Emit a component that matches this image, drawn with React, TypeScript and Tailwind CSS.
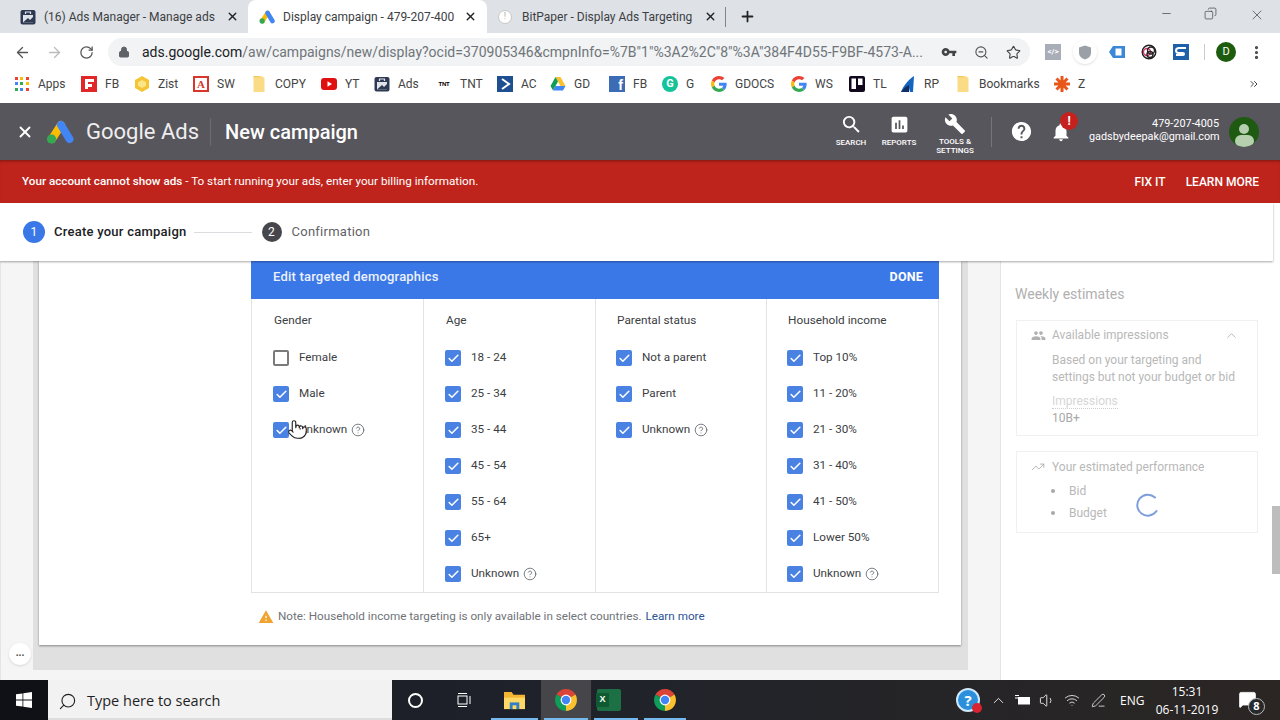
import React from "react";
import { ArrowLeft, ArrowRight, RotateCw, Lock, ZoomOut, Star, X, Plus, Minus, Copy, MoreVertical, ChevronUp, CircleHelp, Check, Search, ChevronsRight, Volume1, Wifi, PenLine, TrendingUp, MessageSquare, Pointer } from "lucide-react";

const P = {
  search: "M15.5 14h-.79l-.28-.27A6.471 6.471 0 0 0 16 9.5 6.5 6.5 0 1 0 9.5 16c1.61 0 3.09-.59 4.23-1.57l.27.28v.79l5 4.99L20.49 19l-4.99-5zm-6 0C7.01 14 5 11.99 5 9.5S7.01 5 9.5 5 14 7.01 14 9.5 11.99 14 9.5 14z",
  chart: "M19 3H5c-1.1 0-2 .9-2 2v14c0 1.1.9 2 2 2h14c1.1 0 2-.9 2-2V5c0-1.1-.9-2-2-2zM9 17H7v-7h2v7zm4 0h-2V7h2v10zm4 0h-2v-4h2v4z",
  wrench: "M22.7 19l-9.1-9.1c.9-2.3.4-5-1.5-6.9-2-2-5-2.4-7.4-1.3L9 6 6 9 1.6 4.7C.4 7.1.9 10.1 2.9 12.1c1.9 1.9 4.6 2.4 6.9 1.5l9.1 9.1c.4.4 1 .4 1.4 0l2.3-2.3c.5-.4.5-1.1.1-1.4z",
  help: "M12 2C6.48 2 2 6.48 2 12s4.48 10 10 10 10-4.48 10-10S17.52 2 12 2zm1 17h-2v-2h2v2zm2.07-7.75l-.9.92C13.45 12.9 13 13.5 13 15h-2v-.5c0-1.1.45-2.1 1.17-2.83l1.24-1.26c.37-.36.59-.86.59-1.41 0-1.1-.9-2-2-2s-2 .9-2 2H8c0-2.21 1.79-4 4-4s4 1.79 4 4c0 .88-.36 1.68-.93 2.25z",
  bell: "M12 22c1.1 0 2-.9 2-2h-4c0 1.1.89 2 2 2zm6-6v-5c0-3.07-1.64-5.64-4.5-6.32V4c0-.83-.67-1.5-1.5-1.5s-1.5.67-1.5 1.5v.68C7.63 5.36 6 7.92 6 11v5l-2 2v1h16v-1l-2-2z",
  people: "M16 11c1.66 0 2.99-1.34 2.99-3S17.66 5 16 5c-1.66 0-3 1.34-3 3s1.34 3 3 3zm-8 0c1.66 0 2.99-1.34 2.99-3S9.66 5 8 5C6.34 5 5 6.34 5 8s1.34 3 3 3zm0 2c-2.33 0-7 1.17-7 3.5V19h14v-2.5c0-2.33-4.67-3.5-7-3.5zm8 0c-.29 0-.62.02-.97.05 1.16.84 1.97 1.97 1.97 3.45V19h6v-2.5c0-2.33-4.67-3.5-7-3.5z",
  warning: "M1 21h22L12 2 1 21zm12-3h-2v-2h2v2zm0-4h-2v-4h2v4z",
  key: "M12.65 10C11.83 7.67 9.61 6 7 6c-3.31 0-6 2.69-6 6s2.69 6 6 6c2.61 0 4.83-1.67 5.65-4H17v4h4v-4h2v-4H12.65zM7 14c-1.1 0-2-.9-2-2s.9-2 2-2 2 .9 2 2-.9 2-2 2z",
};

function Mi({ d, className }: { d: string; className?: string }) {
  return (
    <svg viewBox="0 0 24 24" className={className} fill="currentColor">
      <path d={d} />
    </svg>
  );
}

function AdsLogo({ className }: { className?: string }) {
  return (
    <svg viewBox="0 0 28 24" className={className}>
      <line x1="15" y1="5" x2="6" y2="19" stroke="#fbbc04" strokeWidth="8" strokeLinecap="round" />
      <line x1="15" y1="5" x2="23.5" y2="19" stroke="#4285f4" strokeWidth="8" strokeLinecap="round" />
      <circle cx="5.5" cy="19" r="4.6" fill="#34a853" />
    </svg>
  );
}

function Chrome({ className }: { className?: string }) {
  return (
    <svg viewBox="0 0 24 24" className={className}>
      <path fill="#db4437" d="M12 12L2.5 6.5A11 11 0 0 1 21.5 6.5Z" />
      <path fill="#fbc02d" d="M12 12L21.5 6.5A11 11 0 0 1 12 23Z" />
      <path fill="#0f9d58" d="M12 12L12 23A11 11 0 0 1 2.5 6.5Z" />
      <circle cx="12" cy="12" r="5.4" fill="#fff" />
      <circle cx="12" cy="12" r="4.2" fill="#4285f4" />
    </svg>
  );
}

function GLogo() {
  return (
    <svg viewBox="0 0 48 48" className="w-[16px] h-[16px]">
      <path fill="#EA4335" d="M24 9.5c3.54 0 6.71 1.22 9.21 3.6l6.85-6.85C35.9 2.38 30.47 0 24 0 14.62 0 6.51 5.38 2.56 13.22l7.98 6.19C12.43 13.72 17.74 9.5 24 9.5z" />
      <path fill="#4285F4" d="M46.98 24.55c0-1.57-.15-3.09-.38-4.55H24v9.02h12.94c-.58 2.96-2.26 5.48-4.78 7.18l7.73 6c4.51-4.18 7.09-10.36 7.09-17.65z" />
      <path fill="#FBBC05" d="M10.53 28.59c-.48-1.45-.76-2.99-.76-4.59s.27-3.14.76-4.59l-7.98-6.19C.92 16.46 0 20.12 0 24c0 3.88.92 7.54 2.56 10.78l7.97-6.19z" />
      <path fill="#34A853" d="M24 48c6.48 0 11.93-2.13 16.08-5.81l-7.73-6c-2.15 1.45-4.92 2.3-8.35 2.3-6.26 0-11.57-4.22-13.47-9.91l-7.98 6.19C6.51 42.62 14.62 48 24 48z" />
    </svg>
  );
}

function AdsManagerIcon({ className }: { className?: string }) {
  return (
    <svg viewBox="0 0 16 16" className={className}>
      <rect x="0.5" y="1" width="15" height="14.5" rx="2" fill="#2f3a52" />
      <rect x="3" y="6" width="10" height="7.5" fill="#dfe3ea" />
      <path d="M3 13.5L8 9l2 2 3-3v5.5Z" fill="#2f3a52" />
      <path d="M5.5 5V3h5v2" fill="none" stroke="#dfe3ea" strokeWidth="1.2" />
    </svg>
  );
}

function Folder() {
  return (
    <svg viewBox="0 0 16 16" className="w-[16px] h-[18px]">
      <path d="M2.5 0h8l3 2v14h-11Z" fill="#fbdc86" />
      <path d="M2.5 0h6v1.5h-6Z" fill="#f3cb62" />
    </svg>
  );
}

const AppsIcon = () => (
  <div className="grid grid-cols-3 gap-[2px] w-[14px] h-[14px]">
    {["#ea4335", "#fbbc04", "#ea4335", "#4285f4", "#34a853", "#fbbc04", "#34a853", "#4285f4", "#ea4335"].map((c, i) => (
      <svg key={i} viewBox="0 0 4 4" className="w-[3px] h-[3px]"><rect width="4" height="4" fill={c} /></svg>
    ))}
  </div>
);

const bookmarks: { w: string; label: string; icon: React.ReactNode }[] = [
  { w: "w-[67px]", label: "Apps", icon: <AppsIcon /> },
  {
    w: "w-[53px]", label: "FB", icon: (
      <svg viewBox="0 0 16 16" className="w-[16px] h-[16px]"><rect width="16" height="16" fill="#e12828" /><path d="M4 3h9v3H7v2h4v3H7v2H4Z" fill="#fff" /></svg>
    ),
  },
  {
    w: "w-[59px]", label: "Zist", icon: (
      <svg viewBox="0 0 16 16" className="w-[16px] h-[16px]"><path d="M8 0l7 4v8l-7 4-7-4V4Z" fill="#f5c533" /><path d="M8 4l4 2.3v3.4L8 12 4 9.7V6.3Z" fill="#fde68a" /></svg>
    ),
  },
  {
    w: "w-[58px]", label: "SW", icon: (
      <div className="w-[16px] h-[16px] border-2 border-[#d9362b] flex items-center justify-center text-[#d9362b] text-[11px] font-bold leading-none font-['Liberation_Serif',serif]">A</div>
    ),
  },
  { w: "w-[70px]", label: "COPY", icon: <Folder /> },
  {
    w: "w-[53px]", label: "YT", icon: (
      <svg viewBox="0 0 16 16" className="w-[16px] h-[16px]"><rect y="2" width="16" height="12" rx="3" fill="#e01010" /><path d="M6.5 5.2v5.6L11 8Z" fill="#fff" /></svg>
    ),
  },
  { w: "w-[62px]", label: "Ads", icon: <AdsManagerIcon className="w-[16px] h-[16px]" /> },
  {
    w: "w-[61px]", label: "TNT", icon: (
      <div className="w-[16px] text-center text-[6px] font-black tracking-tighter leading-none text-black font-['Liberation_Sans',sans-serif]">TNT</div>
    ),
  },
  {
    w: "w-[53px]", label: "AC", icon: (
      <svg viewBox="0 0 16 16" className="w-[16px] h-[16px]"><rect width="16" height="16" fill="#1d4f91" /><path d="M5 3l7 5-7 5" fill="none" stroke="#fff" strokeWidth="2" /></svg>
    ),
  },
  {
    w: "w-[59px]", label: "GD", icon: (
      <svg viewBox="0 0 16 16" className="w-[16px] h-[16px]"><path d="M5.5 1h5l5 9h-5Z" fill="#fbc02d" /><path d="M5.5 1L0.5 10l2.5 4.5L8 5.5Z" fill="#0f9d58" /><path d="M3 14.5h10l2.5-4.5H5.5Z" fill="#4285f4" /></svg>
    ),
  },
  {
    w: "w-[53px]", label: "FB", icon: (
      <div className="w-[16px] h-[16px] bg-[#3b6cb5] text-white text-[14px] font-bold leading-[18px] text-right pr-[2px] font-['Liberation_Sans',sans-serif]">f</div>
    ),
  },
  {
    w: "w-[49px]", label: "G", icon: (
      <div className="w-[16px] h-[16px] rounded-full bg-[#15c39a] text-white text-[11px] font-bold leading-[16px] text-center">G</div>
    ),
  },
  { w: "w-[80px]", label: "GDOCS", icon: <GLogo /> },
  { w: "w-[58px]", label: "WS", icon: <GLogo /> },
  {
    w: "w-[51px]", label: "TL", icon: (
      <svg viewBox="0 0 16 16" className="w-[16px] h-[16px]"><rect width="16" height="16" rx="2" fill="#12081e" /><rect x="2.5" y="2.5" width="4.5" height="10.5" fill="#fff" /><rect x="9" y="2.5" width="4.5" height="6.5" fill="#fff" /></svg>
    ),
  },
  {
    w: "w-[55px]", label: "RP", icon: (
      <svg viewBox="0 0 16 16" className="w-[16px] h-[16px]"><path d="M14 0C8 4 4 9 1 16h5l3-4 1 4h3Z" fill="#1565c0" /><path d="M1 16c2-3 4-5 8-7v7Z" fill="#0d2f63" /></svg>
    ),
  },
  { w: "w-[99px]", label: "Bookmarks", icon: <Folder /> },
  {
    w: "w-[40px]", label: "Z", icon: (
      <svg viewBox="0 0 16 16" className="w-[16px] h-[16px]" stroke="#e8561a" strokeWidth="3"><path d="M8 0v16M0 8h16M2.5 2.5l11 11M13.5 2.5l-11 11" /></svg>
    ),
  },
];

function Tab({ w, children, active }: { w: string; children: React.ReactNode; active?: boolean }) {
  return (
    <div className={`${w} h-[33px] flex items-center shrink-0 ${active ? "bg-white rounded-t-[8px]" : ""}`}>{children}</div>
  );
}

function TopBar() {
  return (
    <div className="h-[33px] bg-[#dee1e6] flex items-center text-[12px] text-[#3c4043]">
      <Tab w="w-[248px]">
        <AdsManagerIcon className="ml-[20px] w-[16px] h-[16px]" />
        <span className="ml-[8px] w-[172px] whitespace-nowrap">(16) Ads Manager - Manage ads</span>
        <X size={13} strokeWidth={2.5} className="text-[#222] ml-[10px]" />
      </Tab>
      <Tab w="w-[239px]" active>
        <AdsLogo className="ml-[11px] w-[16px] h-[14px]" />
        <span className="ml-[8px] w-[172px] whitespace-nowrap">Display campaign - 479-207-400</span>
        <X size={13} strokeWidth={2.5} className="text-[#222] ml-[9px]" />
      </Tab>
      <Tab w="w-[239px]">
        <div className="ml-[11px] w-[14px] h-[14px] rounded-full bg-white border border-[#c8c8c8] flex items-center justify-center text-[9px] text-[#aaa] leading-none">!</div>
        <span className="ml-[10px] w-[172px] whitespace-nowrap">BitPaper - Display Ads Targeting</span>
        <X size={13} strokeWidth={2.5} className="text-[#222] ml-[10px]" />
      </Tab>
      <div className="w-px h-[20px] bg-[#80868b] ml-[-1px]" />
      <Plus size={17} strokeWidth={2.5} className="text-[#222] ml-[13px]" />
      <div className="ml-auto flex items-start h-full pt-[7px] text-[#333]">
        <Minus size={13} strokeWidth={1.2} className="mr-[31px]" />
        <Copy size={13} strokeWidth={1.2} className="mr-[32px] -scale-x-100" />
        <X size={16} strokeWidth={1} className="mr-[15px]" />
      </div>
    </div>
  );
}

function Toolbar() {
  return (
    <div className="h-[38px] bg-white flex items-center">
      <ArrowLeft size={17} strokeWidth={1.8} className="ml-[14px] text-[#555]" />
      <ArrowRight size={17} strokeWidth={1.8} className="ml-[15px] text-[#bbb]" />
      <RotateCw size={15} strokeWidth={2} className="ml-[16px] text-[#555]" />
      <div className="ml-[14px] w-[922px] h-[28px] bg-[#f1f3f4] rounded-full flex items-center text-[14px] whitespace-nowrap">
        <Lock size={12} fill="#5f6368" strokeWidth={2} className="ml-[10px] text-[#5f6368]" />
        <span className="ml-[12px] w-[782px] text-[#202124]">
          ads.google.com<span className="text-[#70757a]">/aw/campaigns/new/display?ocid=370905346&amp;cmpnInfo=%7B"1"%3A2%2C"8"%3A"384F4D55-F9BF-4573-A...</span>
        </span>
        <Mi d={P.key} className="ml-[17px] w-[16px] h-[16px] text-[#444]" />
        <ZoomOut size={15} strokeWidth={1.8} className="ml-[17px] text-[#555]" />
        <Star size={15} strokeWidth={1.8} className="ml-[17px] text-[#444]" />
      </div>
      <div className="ml-[15px] w-[16px] h-[16px] bg-[#a9adb8] text-white text-[8px] font-bold flex items-center justify-center">&lt;/&gt;</div>
      <div className="ml-[12px] w-[24px] h-[24px] rounded-full bg-white shadow flex items-center justify-center">
        <svg viewBox="0 0 12 14" className="w-[12px] h-[15px]"><path d="M6 0l6 2v5c0 4-3 6-6 7-3-1-6-3-6-7V2Z" fill="#9aa0a6" /></svg>
      </div>
      <svg viewBox="0 0 16 16" className="ml-[12px] w-[16px] h-[16px]"><path d="M4 2h12v12H4L0 8Z" fill="#3b87d8" /><rect x="6.500" y="4.500" width="6" height="7" fill="#fff" /></svg>
      <svg viewBox="0 0 16 16" className="ml-[16px] w-[16px] h-[16px]" fill="none" stroke="#222" strokeWidth="1.4"><circle cx="8" cy="8" r="6.8" /><circle cx="6" cy="8" r="3.5" stroke="#d6336c" /><circle cx="10" cy="6.5" r="3.5" /><circle cx="9" cy="10.5" r="3" /></svg>
      <svg viewBox="0 0 16 16" className="ml-[16px] w-[16px] h-[16px]"><rect width="16" height="16" fill="#1d5fa8" /><path d="M13 4H6Q3 4 3 6.500T6 9h4q1 0 1 1t-1 1H3" fill="none" stroke="#fff" strokeWidth="2" /></svg>
      <div className="ml-[15px] w-px h-[16px] bg-[#ccc]" />
      <div className="ml-[11px] w-[20px] h-[20px] rounded-full bg-[#1d5c0f] text-white text-[11px] flex items-center justify-center">D</div>
      <MoreVertical size={17} strokeWidth={2.5} className="ml-[12px] text-[#444]" />
    </div>
  );
}

function Bookmarks() {
  return (
    <div className="h-[29px] bg-white pl-[14px] flex items-center text-[12px] text-[#444] whitespace-nowrap pb-[3px]">
      {bookmarks.map((b, i) => (
        <div key={i} className={`${b.w} flex items-center gap-[8px] shrink-0`}>
          <div className="w-[16px] flex justify-center shrink-0">{b.icon}</div>
          <span>{b.label}</span>
        </div>
      ))}
      <ChevronsRight size={12} className="ml-[154px] text-[#444]" />
    </div>
  );
}

function NavItem({ d, size, label, w, lift }: { d: string; size: string; label: React.ReactNode; w: string; lift?: boolean }) {
  return (
    <div className={`${w} flex flex-col items-center font-medium`}>
      <div className="h-[28px] flex items-center"><Mi d={d} className={size} /></div>
      <div className={`${lift ? "mt-[-1px]" : ""} text-[8px] leading-[9px] text-center`}>{label}</div>
    </div>
  );
}

function Header() {
  return (
    <div className="h-[57px] bg-[#58565d] flex items-center text-white mt-[3px] relative">
      <X size={18} strokeWidth={2.5} className="ml-[16px]" />
      <AdsLogo className="ml-[12px] w-[28px] h-[24px]" />
      <div className="ml-[12px] text-[22px] leading-none text-[#eeeeee] whitespace-nowrap">Google Ads</div>
      <div className="ml-[11px] w-px h-[28px] bg-[#6d6b72]" />
      <div className="ml-[14px] text-[20px] font-medium whitespace-nowrap">New campaign</div>
      <div className="ml-auto flex items-start self-stretch pt-[7px]">
        <NavItem w="w-[48px]" d={P.search} size="w-[23px] h-[23px]" label="SEARCH" />
        <NavItem w="w-[48px]" d={P.chart} size="w-[21px] h-[21px]" label="REPORTS" />
        <NavItem w="w-[64px]" d={P.wrench} size="w-[22px] h-[22px]" label={<>TOOLS &amp;<br />SETTINGS</>} lift />
      </div>
      <div className="ml-[4px] w-px h-[30px] bg-[#77757c]" />
      <Mi d={P.help} className="ml-[18px] w-[23px] h-[23px]" />
      <div className="relative ml-[17px] w-[22px] h-[22px]">
        <Mi d={P.bell} className="w-[22px] h-[22px]" />
        <div className="absolute top-[-9px] left-[10px] w-[18px] h-[18px] rounded-full bg-[#c5221f] text-[12px] font-bold flex items-center justify-center">!</div>
      </div>
      <div className="ml-[17px] w-[130px] text-right text-[10.85px] leading-[13px] whitespace-nowrap mb-[4px]">
        <div>479-207-4005</div>
        <div>gadsbydeepak@gmail.com</div>
      </div>
      <div className="ml-[10px] mr-[21px] w-[30px] h-[30px] rounded-full bg-[#1f5a12] overflow-hidden flex flex-col items-center">
        <div className="w-[10px] h-[10px] rounded-full bg-[#b6cfae] mt-[7px]" />
        <div className="w-[19px] h-[12px] rounded-full bg-[#b6cfae] mt-[1px]" />
      </div>
    </div>
  );
}

function Alert() {
  return (
    <div className="h-[43px] bg-[#be241b] flex items-center text-white text-[11.7px] pl-[22px] pr-[21px] shadow-[inset_0_3px_3px_-2px_rgba(0,0,0,0.35)] whitespace-nowrap">
      <span className="font-medium">Your account cannot show ads</span>
      <span>&nbsp;- To start running your ads, enter your billing information.</span>
      <span className="ml-auto font-medium text-[12px]">FIX IT</span>
      <span className="ml-[20px] font-medium text-[12px]">LEARN MORE</span>
    </div>
  );
}

function Stepper() {
  return (
    <div className="h-[58px] bg-white flex items-center pl-[23px] text-[13px] tracking-[0.25px] relative z-10 shadow-[0_1px_2px_rgba(0,0,0,0.35)] w-[1273px] whitespace-nowrap">
      <div className="w-[22px] h-[22px] rounded-full bg-[#3b78e7] text-white text-[12px] flex items-center justify-center">1</div>
      <span className="ml-[9px] font-medium text-[#202124]">Create your campaign</span>
      <div className="ml-[7px] w-[58px] h-px bg-[#dadce0]" />
      <div className="ml-[10px] w-[20px] h-[20px] rounded-full bg-[#46464c] text-white text-[12px] flex items-center justify-center">2</div>
      <span className="ml-[10px] text-[#5f6368]">Confirmation</span>
    </div>
  );
}

function Box({ checked }: { checked: boolean }) {
  return checked ? (
    <div className="w-[16px] h-[16px] rounded-[2px] bg-[#4a82e4] flex items-center justify-center shrink-0">
      <Check size={13} strokeWidth={2.8} className="text-white" />
    </div>
  ) : (
    <div className="w-[16px] h-[16px] rounded-[2px] border-2 border-[#7b7b7b] shrink-0" />
  );
}

function Row({ label, checked = true, help }: { label: string; checked?: boolean; help?: boolean }) {
  return (
    <div className="h-[36px] flex items-center">
      <Box checked={checked} />
      <span className="ml-[10px] text-[11.7px] text-[#3c4043]">{label}</span>
      {help && <CircleHelp size={14} strokeWidth={1.4} className="ml-[4px] text-[#5f6368]" />}
    </div>
  );
}

function Col({ w, title, pl, last, children }: { w: string; title: string; pl: string; last?: boolean; children: React.ReactNode }) {
  return (
    <div className={`${w} ${pl} shrink-0 h-[293px] pt-[13px] ${last ? "" : "border-r border-[#e3e3e3]"}`}>
      <div className="h-[16px] leading-[16px] text-[11.8px] text-[#3c4043] pl-[1px] mb-[12px]">{title}</div>
      {children}
    </div>
  );
}

function Card() {
  return (
    <div className="h-[384px] bg-white pl-[212px] shadow-[0_1px_2px_rgba(0,0,0,0.4)] whitespace-nowrap">
      <div className="w-[688px]">
        <div className="h-[38px] bg-[#3b78e7] flex items-center justify-between pl-[22px] pr-[16px] pb-[6px] text-white text-[13px] tracking-[0.2px] font-medium">
          <span className="opacity-90">Edit targeted demographics</span>
          <span className="text-[12.5px] font-bold">DONE</span>
        </div>
        <div className="flex border-l border-r border-b border-[#e3e3e3]">
          <Col w="w-[172px]" pl="pl-[21px]" title="Gender">
            <Row label="Female" checked={false} />
            <Row label="Male" />
            <Row label="Unknown" help />
          </Col>
          <Col w="w-[172px]" pl="pl-[21px]" title="Age">
            {["18 - 24", "25 - 34", "35 - 44", "45 - 54", "55 - 64", "65+"].map((t) => <Row key={t} label={t} />)}
            <Row label="Unknown" help />
          </Col>
          <Col w="w-[171px]" pl="pl-[20px]" title="Parental status">
            <Row label="Not a parent" />
            <Row label="Parent" />
            <Row label="Unknown" help />
          </Col>
          <Col w="w-[171px]" pl="pl-[20px]" title="Household income" last>
            {["Top 10%", "11 - 20%", "21 - 30%", "31 - 40%", "41 - 50%", "Lower 50%"].map((t) => <Row key={t} label={t} />)}
            <Row label="Unknown" help />
          </Col>
        </div>
        <div className="h-[16px] mt-[16px] flex items-center pl-[7px] text-[11.7px] text-[#6f7378]">
          <Mi d={P.warning} className="w-[16px] h-[16px] text-[#f0a32f]" />
          <span className="ml-[4px]">Note: Household income targeting is only available in select countries.</span>
          <span className="ml-[4px] text-[#2a5596]">Learn more</span>
        </div>
      </div>
    </div>
  );
}

function Side() {
  return (
    <div className="w-[271px] pl-[14px] pt-[25px] text-[12px] text-[#b8b8b8] whitespace-nowrap">
      <div className="text-[14px] leading-[16px] text-[#b0b0b0]">Weekly estimates</div>
      <div className="mt-[18px] ml-[1px] w-[242px] h-[116px] border border-[#f0f0f0] pl-[14px] pr-[18px] pt-[6px]">
        <div className="flex items-center h-[16px]">
          <Mi d={P.people} className="w-[15px] h-[15px] text-[#b0b0b0]" />
          <span className="ml-[6px]">Available impressions</span>
          <ChevronUp size={15} strokeWidth={1.5} className="ml-auto" />
        </div>
        <div className="ml-[21px] mt-[9px] leading-[17px]">Based on your targeting and<br />settings but not your budget or bid</div>
        <div className="ml-[21px] mt-[8px] w-fit leading-[14px] text-[#d6d6d6] border-b border-dotted border-[#cfcfcf]">Impressions</div>
        <div className="ml-[21px] mt-[1px] leading-[16px] text-[#a8a8a8]">10B+</div>
      </div>
      <div className="mt-[15px] ml-[1px] w-[242px] h-[82px] border border-[#f0f0f0] pl-[14px] pt-[7px] relative">
        <div className="flex items-center h-[16px]">
          <TrendingUp size={14} strokeWidth={1.4} className="text-[#a8a8a8]" />
          <span className="ml-[7px]">Your estimated performance</span>
        </div>
        <ul className="ml-[20px] mt-[5px]">
          <li className="h-[22px] flex items-center"><span className="w-[4px] h-[4px] rounded-full bg-[#a8a8a8] mr-[14px]" />Bid</li>
          <li className="h-[22px] flex items-center"><span className="w-[4px] h-[4px] rounded-full bg-[#a8a8a8] mr-[14px]" />Budget</li>
        </ul>
        <svg viewBox="0 0 24 24" className="absolute left-[119px] top-[41px] w-[24px] h-[24px]" fill="none" stroke="#7e9ddb" strokeWidth="2" strokeLinecap="round">
          <path d="M19 4.500A10.500 10.500 0 1 0 20.500 18" />
        </svg>
      </div>
    </div>
  );
}

function Main() {
  return (
    <div className="h-[419px] flex bg-white overflow-hidden relative">
      <div className="w-[1001px] shrink-0 bg-[#f5f5f5] border-l border-r border-[#e4e4e4] pl-[32px] pr-[31px] pb-[10px]">
        <div className="h-full w-[935px] bg-[#e0e0e0] pl-[6px] pr-[7px]">
          <Card />
        </div>
      </div>
      <Side />
      <div className="w-[8px] ml-auto">
        <div className="h-[245px]" />
        <div className="h-[68px] bg-[#bdbdbd]" />
      </div>
      <div className="absolute left-[9px] top-[382px] w-[22px] h-[22px] rounded-full bg-white shadow flex items-center justify-center text-[10px] font-bold text-[#444] leading-none pb-[3px]">...</div>
      <Pointer size={21} strokeWidth={1.3} fill="#ffffff" className="absolute left-[287px] top-[158px] text-[#222]" />
    </div>
  );
}

function TaskIcon({ w, active, bar, className, children }: { w: string; active?: boolean; bar?: boolean; className?: string; children: React.ReactNode }) {
  return (
    <div className={`${w} h-[40px] flex items-center justify-center relative shrink-0 ${active ? "bg-[#46464a]" : ""} ${className ?? ""}`}>
      {children}
      {bar && <div className="absolute bottom-0 inset-x-[3px] h-[2px] bg-[#76b9ed]" />}
    </div>
  );
}

function Taskbar() {
  return (
    <div className="h-[40px] flex items-center bg-gradient-to-r from-[#171b26] via-[#20232a] to-[#2b2624] text-white font-['Open_Sans',sans-serif]">
      <div className="w-[48px] h-full bg-[#101116] flex items-center justify-center">
        <svg viewBox="0 0 16 16" className="w-[16px] h-[16px]" fill="#fff"><path d="M0 2.300L6.500 1.400V7.600H0ZM7.300 1.300L16 0V7.600H7.300ZM0 8.400H6.500V14.600L0 13.700ZM7.300 8.400H16V16L7.300 14.700Z" /></svg>
      </div>
      <div className="w-[344px] h-full bg-[#f2f2f2] flex items-center text-[#1f1f1f] text-[14.5px] border-b-2 border-[#ddd] pt-[4px]">
        <Search size={19} strokeWidth={1.4} className="ml-[10px] -scale-x-100" />
        <span className="ml-[10px] whitespace-nowrap">Type here to search</span>
      </div>
      <div className="w-[47px] flex justify-center ml-0">
        <div className="w-[15px] h-[15px] rounded-full border-2 border-white" />
      </div>
      <div className="w-[49px] flex justify-center">
        <svg viewBox="0 0 16 16" className="w-[16px] h-[16px]" fill="none" stroke="#fff" strokeWidth="1"><rect x="2" y="4" width="9" height="8" /><path d="M2 1.500h9M2 14.500h9M14 4v8" /></svg>
      </div>
      <TaskIcon w="w-[53px]" bar>
        <svg viewBox="0 0 24 22" className="w-[23px] h-[21px]"><path d="M1 2h8l2 3h12v15H1Z" fill="#f2b632" /><rect x="1" y="8" width="22" height="12" fill="#ffd966" /><rect x="7" y="13" width="10" height="7" fill="#2f7fc9" /><rect x="10" y="16" width="4" height="4" fill="#ffd966" /></svg>
      </TaskIcon>
      <TaskIcon w="w-[50px]" active bar><Chrome className="w-[24px] h-[24px]" /></TaskIcon>
      <TaskIcon w="w-[50px]" bar className="pr-[14px]">
        <div className="w-[24px] h-[22px] bg-[#1d7044] rounded-[2px] relative">
          <div className="absolute left-[-1px] top-[4px] w-[13px] h-[14px] bg-[#0f5a30] text-white text-[9px] font-bold flex items-center justify-center font-['Liberation_Sans',sans-serif]">X</div>
        </div>
      </TaskIcon>
      <TaskIcon w="w-[48px]" bar><Chrome className="w-[24px] h-[24px]" /></TaskIcon>
      <div className="ml-auto flex items-center h-full">
        <div className="relative w-[24px] h-[24px] rounded-full bg-[#2b8fdc] border-2 border-[#cfe8fb] text-white text-[15px] font-bold flex items-center justify-center leading-none">
          ?
          <div className="absolute right-[-4px] bottom-[-3px] w-[10px] h-[10px] rounded-full bg-[#d9232e]" />
        </div>
        <ChevronUp size={17} strokeWidth={1.2} className="ml-[10px]" />
        <svg viewBox="0 0 16 12" className="ml-[8px] w-[16px] h-[12px]" fill="none" stroke="#fff"><rect x="3.500" y="3.500" width="11" height="6.500" fill="#fff" /><path d="M0 1.500h4M0 4h4" /></svg>
        <Volume1 size={17} strokeWidth={1.2} className="ml-[8px]" />
        <Wifi size={16} strokeWidth={1.2} className="ml-[8px]" />
        <PenLine size={15} strokeWidth={1.2} className="ml-[11px]" />
        <span className="ml-[14px] text-[12px] w-[24px] pt-[2px]">ENG</span>
        <div className="ml-[2px] w-[82px] text-center text-[12px] leading-[18px] pt-[2px]">
          <div>15:31</div>
          <div>06-11-2019</div>
        </div>
        <div className="relative ml-[10px] mr-[22px] w-[20px] h-[20px]">
          <MessageSquare size={19} fill="#fff" strokeWidth={1} />
          <div className="absolute right-[-7px] bottom-[-5px] w-[17px] h-[17px] rounded-full bg-[#26282c] border border-[#bbb] text-[11px] font-bold flex items-center justify-center">8</div>
        </div>
      </div>
    </div>
  );
}

export default function App() {
  return (
    <div className="w-[1280px] h-[720px] overflow-hidden flex flex-col bg-white font-['Roboto',sans-serif]">
      <TopBar />
      <Toolbar />
      <Bookmarks />
      <Header />
      <Alert />
      <Stepper />
      <Main />
      <Taskbar />
    </div>
  );
}
